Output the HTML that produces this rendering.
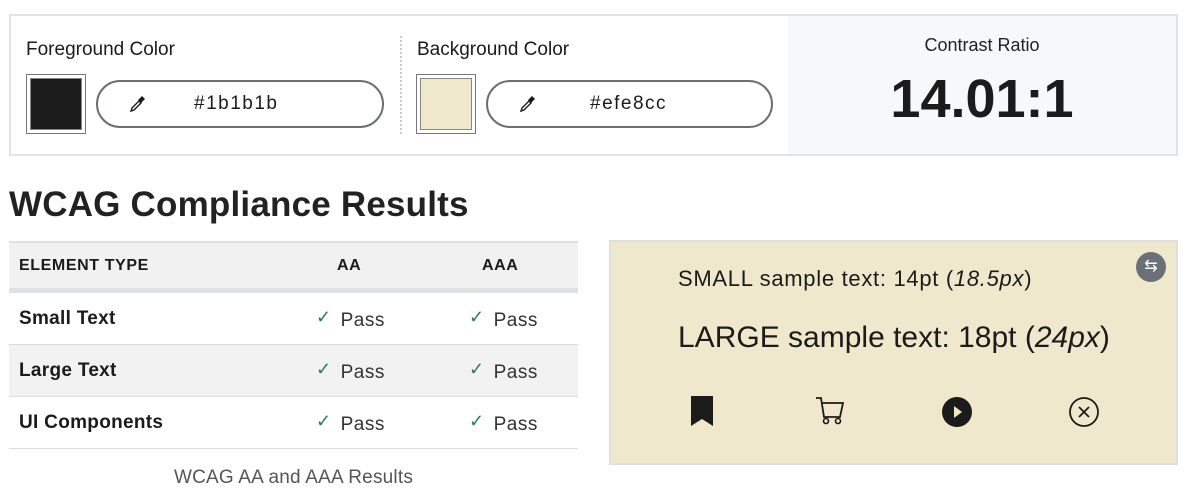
<!DOCTYPE html>
<html><head><style>
*{box-sizing:border-box;margin:0;padding:0}
body{width:1188px;height:499px;background:#fff;font-family:"Liberation Sans",sans-serif;color:#1b1b1b;position:relative;overflow:hidden}
.abs{position:absolute}
.box{left:9px;top:14px;width:1169px;height:142px;border:2px solid #e1e3e6}
.right{left:788px;top:16px;width:388px;height:138px;background:#f7f8fa}
.lbl{font-size:19px;color:#1b1b1b}
.sw{width:60px;height:60px;border:1px solid #777;padding:3px;background:#fff}
.sw div{width:100%;height:100%;border:1px solid #888}
.pill{height:48px;border:2px solid #6b6f75;border-radius:24px;background:#fff;font-size:19px;letter-spacing:1.5px}
.th{font-weight:bold;font-size:16px;letter-spacing:.6px}
.row{left:9px;width:569px;height:52px;border-bottom:1px solid #dcdcdc}
.rl{position:absolute;left:10px;top:15px;font-weight:bold;font-size:19px;letter-spacing:.3px}
.p{position:absolute;top:17px;font-size:19px;color:#333;letter-spacing:.5px}
.p b{color:#2e7d55;font-weight:normal;font-size:18px;margin-right:9px;position:relative;top:-3px}
</style></head><body>
<div class="abs box"></div>
<div class="abs right"></div>
<div class="abs" style="left:400px;top:36px;height:98px;border-left:2px dotted #ccc"></div>
<div class="abs lbl" style="left:26px;top:39px">Foreground Color</div>
<div class="abs lbl" style="left:417px;top:39px">Background Color</div>
<div class="abs sw" style="left:26px;top:74px"><div style="background:#1b1b1b"></div></div>
<div class="abs sw" style="left:416px;top:74px"><div style="background:#efe8cc"></div></div>
<div class="abs pill" style="left:96px;top:80px;width:288px">
<svg class="abs" style="left:30px;top:12px" width="20" height="20" viewBox="0 0 20 20"><path d="M3 17l1-3 7-7 2 2-7 7z" fill="none" stroke="#1b1b1b" stroke-width="1.4"/><path d="M10 6l4-4 3 3-4 4z" fill="#1b1b1b"/></svg>
<span class="abs" style="left:96px;top:11px">#1b1b1b</span></div>
<div class="abs pill" style="left:486px;top:80px;width:287px">
<svg class="abs" style="left:30px;top:12px" width="20" height="20" viewBox="0 0 20 20"><path d="M3 17l1-3 7-7 2 2-7 7z" fill="none" stroke="#1b1b1b" stroke-width="1.4"/><path d="M10 6l4-4 3 3-4 4z" fill="#1b1b1b"/></svg>
<span class="abs" style="left:102px;top:11px">#efe8cc</span></div>
<div class="abs" style="left:788px;width:388px;top:35px;text-align:center;font-size:18px;color:#222">Contrast Ratio</div>
<div class="abs" style="left:788px;width:388px;top:68px;text-align:center;font-size:54px;font-weight:bold">14.01:1</div>
<div class="abs" style="left:9px;top:185px;font-size:35px;font-weight:bold;color:#222;letter-spacing:.2px">WCAG Compliance Results</div>
<div class="abs" style="left:9px;top:241px;width:569px;height:52px;background:#f1f1f1;border-top:2px solid #e0e0e0;border-bottom:5px solid #dfe0e2"></div>
<div class="abs th" style="left:19px;top:257px">ELEMENT TYPE</div>
<div class="abs th" style="left:337px;top:257px">AA</div>
<div class="abs th" style="left:482px;top:257px">AAA</div>
<div class="abs row" style="top:293px"><span class="rl">Small Text</span><span class="p" style="left:307px"><b>✓</b>Pass</span><span class="p" style="left:460px"><b>✓</b>Pass</span></div>
<div class="abs row" style="top:345px;background:#f2f2f2"><span class="rl">Large Text</span><span class="p" style="left:307px"><b>✓</b>Pass</span><span class="p" style="left:460px"><b>✓</b>Pass</span></div>
<div class="abs row" style="top:397px"><span class="rl">UI Components</span><span class="p" style="left:307px"><b>✓</b>Pass</span><span class="p" style="left:460px"><b>✓</b>Pass</span></div>
<div class="abs" style="left:9px;width:569px;top:467px;text-align:center;font-size:19px;color:#555;letter-spacing:.2px">WCAG AA and AAA Results</div>
<div class="abs" style="left:609px;top:240px;width:569px;height:225px;background:#efe8cc;border:2px solid #dfdfdf"></div>
<div class="abs" style="left:1136px;top:252px;width:30px;height:30px;border-radius:50%;background:#6b7078;color:#fff;text-align:center;font-size:16px;line-height:30px">⇆</div>
<div class="abs" style="left:678px;top:266px;font-size:22px;letter-spacing:.7px">SMALL sample text: 14pt (<i>18.5px</i>)</div>
<div class="abs" style="left:678px;top:321px;font-size:30px">LARGE sample text: 18pt (<i>24px</i>)</div>
<svg class="abs" style="left:690px;top:395px" width="26" height="32" viewBox="0 0 26 32"><path d="M1 1h22v30l-11-7-11 7z" fill="#1b1b1b"/></svg>
<svg class="abs" style="left:814px;top:396px" width="32" height="30" viewBox="0 0 32 30"><path d="M2 2h5l3 19h16l3-14H8" fill="none" stroke="#1b1b1b" stroke-width="1.8"/><circle cx="12" cy="25" r="2.5" fill="none" stroke="#1b1b1b" stroke-width="1.6"/><circle cx="24" cy="25" r="2.5" fill="none" stroke="#1b1b1b" stroke-width="1.6"/></svg>
<svg class="abs" style="left:941px;top:396px" width="32" height="32" viewBox="0 0 32 32"><circle cx="16" cy="16" r="15" fill="#1b1b1b"/><path d="M13 10l8 6-8 6z" fill="#efe8cc"/></svg>
<svg class="abs" style="left:1068px;top:396px" width="32" height="32" viewBox="0 0 32 32"><circle cx="16" cy="16" r="14" fill="none" stroke="#1b1b1b" stroke-width="1.8"/><path d="M11 11l10 10M21 11l-10 10" stroke="#1b1b1b" stroke-width="1.8"/></svg>
</body></html>
